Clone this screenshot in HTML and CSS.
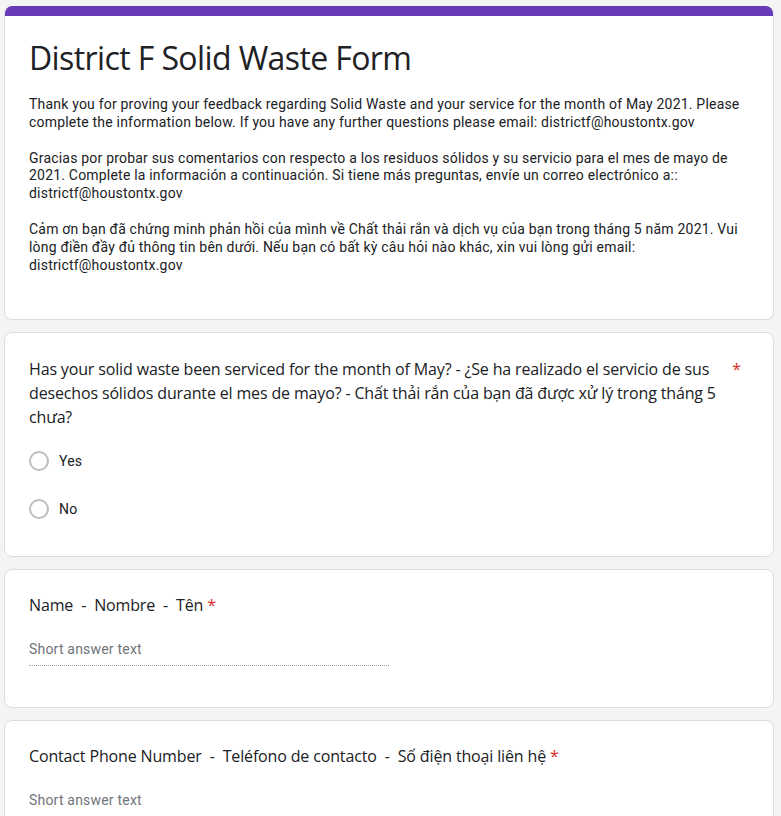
FILE: index.html
```html
<!DOCTYPE html>
<html lang="en">
<head>
    <meta charset="UTF-8">
    <meta name="viewport" content="width=device-width, initial-scale=1.0">
    <title>District F Solid Waste Form</title>
<link rel="stylesheet" href="styles.css">
</head>
<body>

    <div class="form">

        <div class="card header-card">
            <div class="header-bar"></div>
            <div class="header-body">
                <h1 class="form-title">District F Solid Waste Form</h1>
                <div class="form-desc">
                    <p>Thank you for proving your feedback regarding Solid Waste and your service for the month of May 2021. Please complete the information below. If you have any further questions please email: districtf@houstontx.gov</p>
                    <p>Gracias por probar sus comentarios con respecto a los residuos sólidos y su servicio para el mes de mayo de 2021. Complete la información a continuación. Si tiene más preguntas, envíe un correo electrónico a:: districtf@houstontx.gov</p>
                    <p>Cảm ơn bạn đã chứng minh phản hồi của mình về Chất thải rắn và dịch vụ của bạn trong tháng 5 năm 2021. Vui lòng điền đầy đủ thông tin bên dưới. Nếu bạn có bất kỳ câu hỏi nào khác, xin vui lòng gửi email: districtf@houstontx.gov</p>
                </div>
            </div>
        </div>

        <div class="card question question-choice">
            <div class="q-title q-title-wrap">
                <span class="q-text">Has your solid waste been serviced for the month of May? - ¿Se ha realizado el servicio de sus desechos sólidos durante el mes de mayo? - Chất thải rắn của bạn đã được xử lý trong tháng 5 chưa?</span>
                <span class="req">*</span>
            </div>
            <div class="options">
                <label class="option"><span class="radio"></span>Yes</label>
                <label class="option"><span class="radio"></span>No</label>
            </div>
        </div>

        <div class="card question question-text">
            <div class="q-title">Name &nbsp;-&nbsp; Nombre &nbsp;-&nbsp; Tên <span class="req">*</span></div>
            <div class="short-answer">Short answer text</div>
        </div>

        <div class="card question question-text">
            <div class="q-title">Contact Phone Number &nbsp;-&nbsp; Teléfono de contacto &nbsp;-&nbsp; Số điện thoại liên hệ <span class="req">*</span></div>
            <div class="short-answer">Short answer text</div>
        </div>

    </div>

</body>
</html>
```

FILE: styles.css
```css
*,*::before,*::after {
    box-sizing: border-box;
    margin: 0;
    padding: 0;
}

body {
    background-color: #f4f4f4;
    color: #202124;
    font-family: Roboto, 'Liberation Sans', sans-serif;
    letter-spacing: 0.2px;
}

.form {
    width: 770px;
    margin-left: 4px;
    padding-top: 6px;
    display: flex;
    flex-direction: column;
    gap: 12px;
}

.card {
    background-color: #fff;
    border: 1px solid #dadce0;
    border-radius: 8px;
}

/* header card */
.header-card {
    border-top: none;
    overflow: hidden;
}

.header-bar {
    height: 10px;
    background-color: #673ab7;
}

.header-body {
    padding: 22px 24px 24px;
    min-height: 303px;
}

.form-title {
    font-family: 'Open Sans', sans-serif;
    font-weight: 400;
    font-size: 32px;
    line-height: 40px;
    letter-spacing: -0.6px;
    color: #202124;
}

.form-desc {
    margin-top: 18px;
    font-size: 14px;
    line-height: 17.85px;
}

.form-desc p + p {
    margin-top: 17.85px;
}

/* questions */
.question {
    padding: 24px;
}

.question-choice {
    padding-bottom: 23px;
}

.question-text {
    padding-top: 23px;
}

.q-title {
    font-family: 'Open Sans', sans-serif;
    font-size: 16px;
    line-height: 24px;
    letter-spacing: -0.15px;
    color: #202124;
}

.q-title-wrap {
    display: flex;
    gap: 13px;
    padding-right: 8px;
}

.q-text {
    flex: 1;
}

.req {
    color: #d93025;
}

.options {
    margin-top: 8px;
}

.option {
    height: 48px;
    display: flex;
    align-items: center;
    gap: 10px;
    font-size: 14px;
}

.radio {
    width: 20px;
    height: 20px;
    border: 2px solid #bdbdbd;
    border-radius: 50%;
}

.short-answer {
    margin-top: 16px;
    margin-bottom: 17px;
    width: 360px;
    height: 33px;
    line-height: 32px;
    font-size: 14px;
    color: #70757a;
    border-bottom: 1px dotted #9aa0a6;
}
```
